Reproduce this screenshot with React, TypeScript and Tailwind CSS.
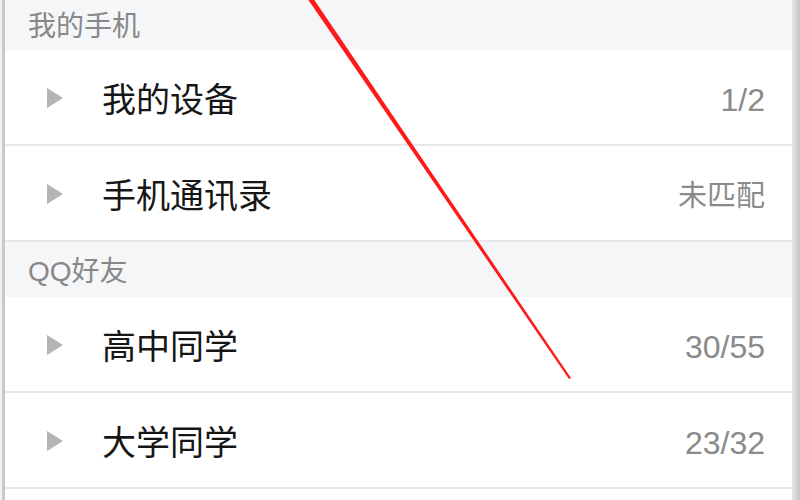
const FONT = "font-['Liberation_Sans','Noto_Sans_CJK_SC',sans-serif]";

type Item = { name: string; count: string; countSize: string };

const SECTIONS: { title: string; height: string; items: Item[] }[] = [
  {
    title: '我的手机',
    height: 'h-[50px]',
    items: [
      { name: '我的设备', count: '1/2', countSize: 'text-[32px]' },
      { name: '手机通讯录', count: '未匹配', countSize: 'text-[29px]' },
    ],
  },
  {
    title: 'QQ好友',
    height: 'h-[55px]',
    items: [
      { name: '高中同学', count: '30/55', countSize: 'text-[32px]' },
      { name: '大学同学', count: '23/32', countSize: 'text-[32px]' },
    ],
  },
];

function Caret() {
  return (
    <svg width="16" height="20" viewBox="0 0 16 20" className="shrink-0 -mt-[4px]">
      <polygon points="0,0 16,10 0,20" fill="#b4b4b4" />
    </svg>
  );
}

function Row({ item }: { item: Item }) {
  return (
    <div className="h-[96px] flex items-center border-b-2 border-[#e8e8ea] bg-white pt-[6px] pl-[42px] pr-[27px]">
      <Caret />
      <span className="ml-[39px] text-[34px] text-[#161616] leading-none">{item.name}</span>
      <span className={`ml-auto ${item.countSize} text-[#8a8a8a] leading-none`}>{item.count}</span>
    </div>
  );
}

export default function App() {
  return (
    <div className={`relative w-[800px] h-[500px] overflow-hidden bg-white flex ${FONT}`}>
      <div className="w-[2px] bg-[#f2f2f2] shrink-0" />
      <div className="w-[3px] bg-[#c9c9c9] shrink-0" />
      <div className="flex-1 flex flex-col">
        {SECTIONS.map(s => (
          <div key={s.title}>
            <div className={`${s.height} bg-[#f5f6f8] flex items-center pt-[4px] pl-[23px] text-[28px] text-[#888888] leading-none`}>
              {s.title}
            </div>
            {s.items.map(it => <Row key={it.name} item={it} />)}
          </div>
        ))}
      </div>
      <div className="w-[8px] shrink-0 bg-gradient-to-r from-[#e6e6e6] to-[#c4c4c4]" />

      {/* red annotation stroke */}
      <svg className="absolute inset-0 pointer-events-none" width="800" height="500" viewBox="0 0 800 500">
        <polygon points="307,-2 313,-2 571,378 569,379" fill="#ff1a1a" />
      </svg>
    </div>
  );
}
